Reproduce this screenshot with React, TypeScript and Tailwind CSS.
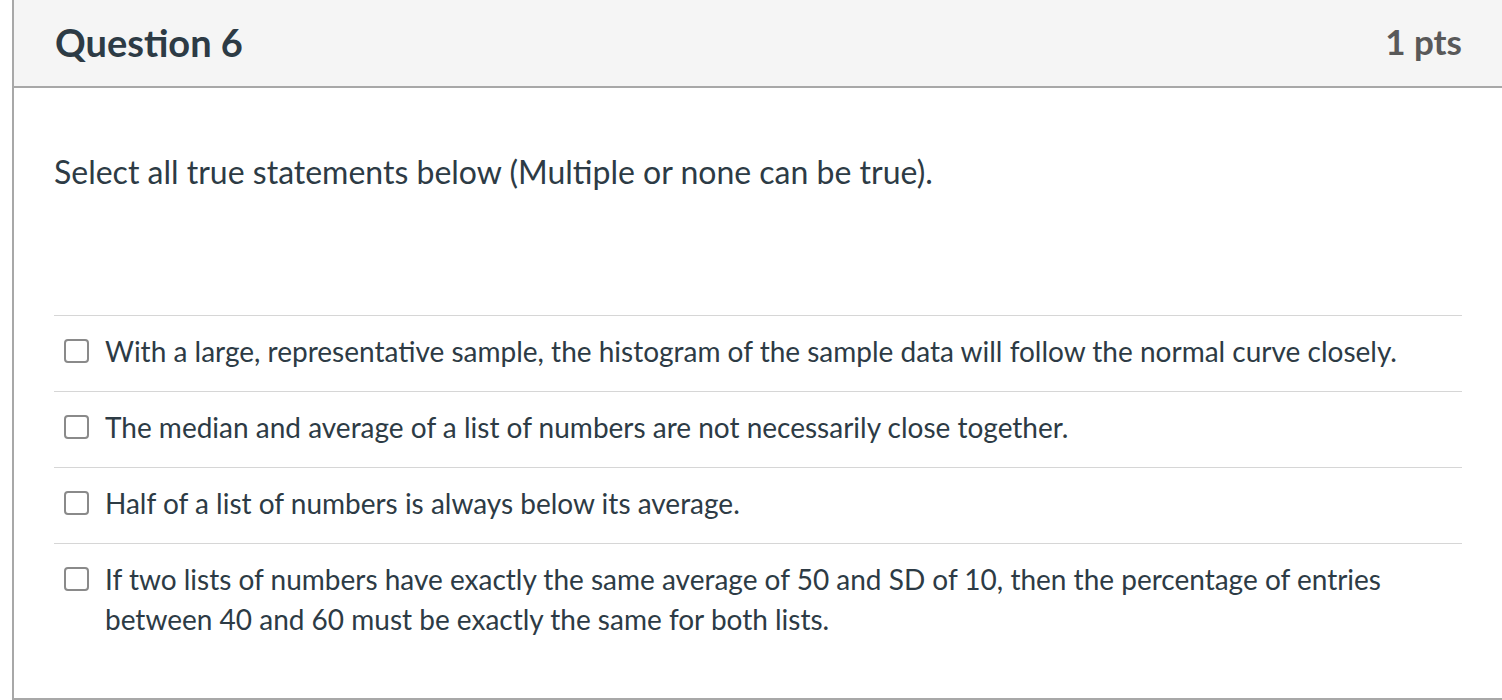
import React from "react";

const answers = [
  "With a large, representative sample, the histogram of the sample data will follow the normal curve closely.",
  "The median and average of a list of numbers are not necessarily close together.",
  "Half of a list of numbers is always below its average.",
  "If two lists of numbers have exactly the same average of 50 and SD of 10, then the percentage of entries between 40 and 60 must be exactly the same for both lists.",
];

export default function App() {
  return (
    <div className="w-[1502px] h-[700px] overflow-hidden bg-white" style={{ fontFamily: "Lato, 'Open Sans', sans-serif" }}>
      <div className="ml-[12px] w-[1490px] h-[700px] border-l-2 border-b-2 border-[#a8a8a8] flex flex-col">
        <div className="h-[88px] shrink-0 bg-[#f5f5f5] border-b-2 border-[#a8a8a8] flex items-center justify-between pl-[41px] pr-[40px] pb-[3px]">
          <div className="text-[38px] font-bold text-[#2d3b45] leading-none">Question 6</div>
          <div className="text-[35px] font-bold text-[#595959] leading-none">1 pts</div>
        </div>
        <div className="flex-1 pl-[40px] pr-[40px] pt-[64px]">
          <p className="text-[32px] leading-[40px] text-[#2d3b45]">Select all true statements below (Multiple or none can be true).</p>
          <div className="mt-[123px]">
            {answers.map((a, i) => (
              <div key={i} className="border-t border-[#d6d6d6] pl-[10px] pt-[15px] pb-[20px] flex items-start gap-[16px]">
                <div className="mt-[8px] w-[25px] h-[24px] shrink-0 border-2 border-[#8a8a8a] rounded-[4px] bg-white" />
                <div className="text-[28px] leading-[40px] text-[#2d3b45] pr-[10px]">{a}</div>
              </div>
            ))}
          </div>
        </div>
      </div>
    </div>
  );
}
